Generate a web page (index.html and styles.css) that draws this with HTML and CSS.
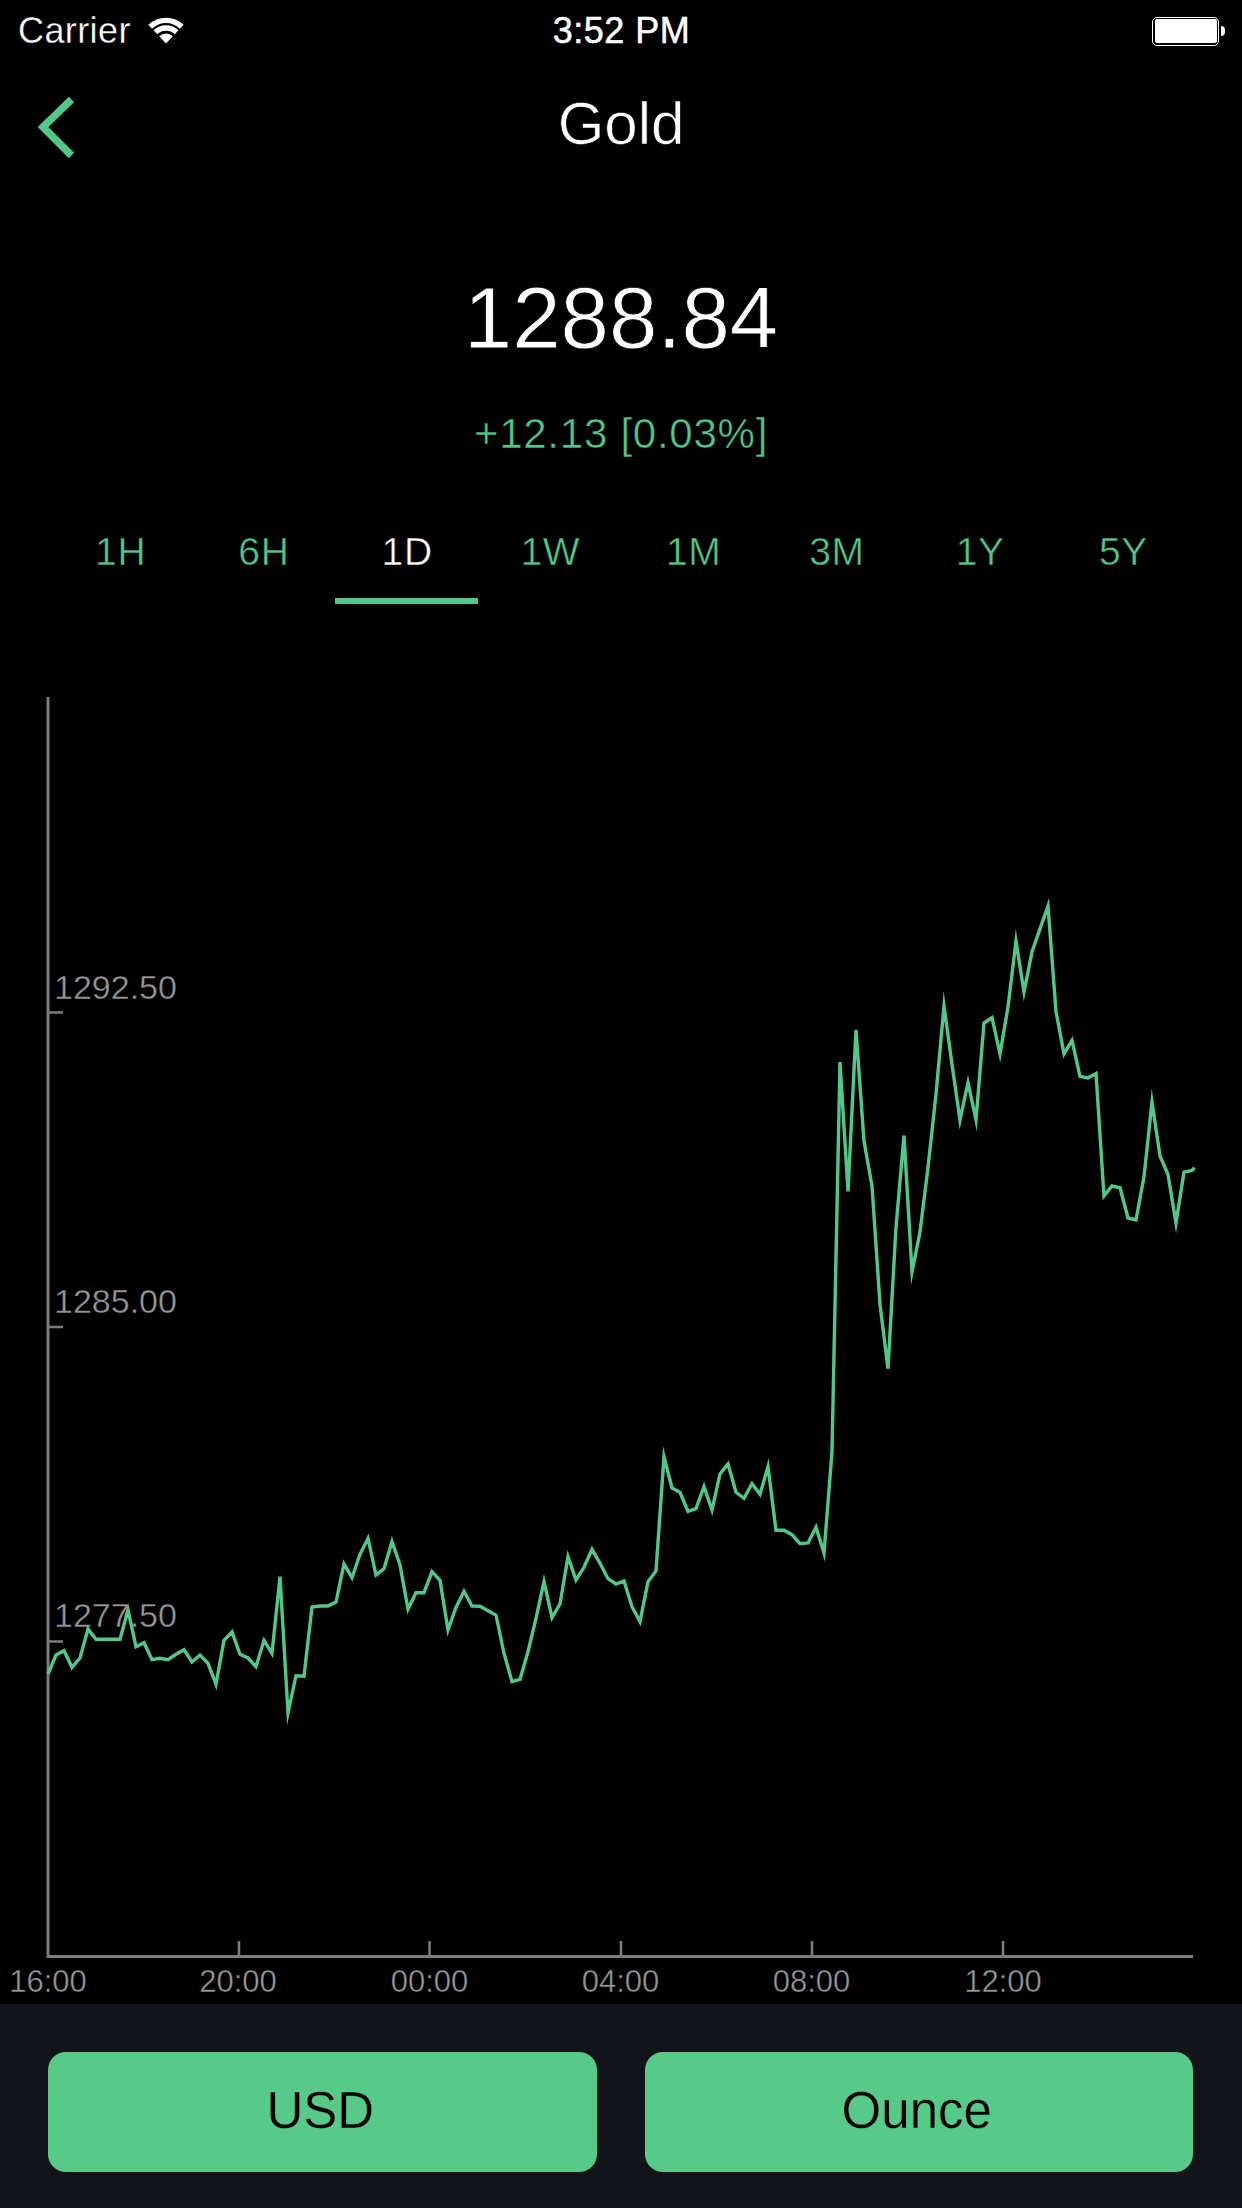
FILE: index.html
```html
<!DOCTYPE html>
<html lang="en">
<head>
<meta charset="utf-8">
<title>Gold</title>
<link rel="stylesheet" href="styles.css">
</head>
<body>
<div class="screen">
  <header class="status">
    <div class="status-left">
      <span class="carrier">Carrier</span>
      <svg class="wifi" viewBox="0 0 38 27" aria-hidden="true">
        <path class="wifi-fan" d="M19 26.5 L12.2 19.2 A10 10 0 0 1 25.8 19.2 Z"/>
        <path class="wifi-arc" d="M8.4 15.3 A15.4 15.4 0 0 1 29.6 15.3"/>
        <path class="wifi-arc" d="M3.2 9.7 A22.8 22.8 0 0 1 34.8 9.7"/>
      </svg>
    </div>
    <span class="clock">3:52 PM</span>
    <div class="status-right">
      <div class="battery"><div class="battery-fill"></div></div>
      <div class="battery-nub"></div>
    </div>
  </header>

  <nav class="nav">
    <svg class="back" viewBox="0 0 44 70" aria-hidden="true">
      <polyline points="39.5,7.5 11,35 39.5,63.5"/>
    </svg>
    <h1 class="title">Gold</h1>
  </nav>

  <section class="quote">
    <div class="price">1288.84</div>
    <div class="change">+12.13 [0.03%]</div>
  </section>

  <div class="tabs">
    <div class="tab">1H</div>
    <div class="tab">6H</div>
    <div class="tab tab-active">1D</div>
    <div class="tab">1W</div>
    <div class="tab">1M</div>
    <div class="tab">3M</div>
    <div class="tab">1Y</div>
    <div class="tab">5Y</div>
  </div>

  <svg class="chart" viewBox="0 604 1242 1400" aria-label="Gold price chart">
    <g class="axis">
      <path d="M48 697 V1956.5 H1193"/>
    </g>
    <g class="tick">
      <path d="M48 1012.5 H63 M48 1327 H63 M48 1641.5 H63"/>
      <path d="M239 1941 V1956 M429.5 1941 V1956 M621 1941 V1956 M812 1941 V1956 M1003 1941 V1956"/>
    </g>
    <g class="ylabels">
      <text x="54" y="999">1292.50</text>
      <text x="54" y="1313">1285.00</text>
      <text x="54" y="1627">1277.50</text>
    </g>
    <g class="xlabels">
      <text x="48" y="1992">16:00</text>
      <text x="238" y="1992">20:00</text>
      <text x="429.5" y="1992">00:00</text>
      <text x="620.5" y="1992">04:00</text>
      <text x="811.5" y="1992">08:00</text>
      <text x="1003" y="1992">12:00</text>
    </g>
    <polyline class="line" points="48,1674 56,1655 64,1650.7 72,1667.3 80,1658 88,1629 96,1639.3 104,1639.3 112,1639.3 120,1639.3 128,1610 136,1646.7 144,1642.7 152,1659.7 160,1658.3 168,1659.7 176,1654.3 184,1649.7 192,1662 200,1655 208,1663.3 216,1684.3 224,1640.3 232,1632 240,1654.3 248,1658 256,1666.7 264,1640.3 272,1653.3 280,1576.7 288,1713 296,1675.7 304,1676.3 312,1607 320,1606 328,1606 336,1602 344,1564 352,1577.7 360,1554.3 368,1538.3 376,1575 384,1568.7 392,1541.7 400,1565 408,1609 416,1592.7 424,1592.7 432,1571.7 440,1580.3 448,1630 456,1607.3 464,1591.3 472,1606 480,1606.3 488,1610.7 496,1615 504,1653.3 512,1681.7 520,1679.3 528,1651.7 536,1618.3 544,1581.7 552,1617.7 560,1604 568,1556.7 576,1580 584,1567.3 592,1549.3 600,1563.3 608,1578.7 616,1584 624,1581 632,1606.7 640,1621.7 648,1581.7 656,1571 664,1456.7 672,1488 680,1492.3 688,1511.3 696,1508.7 704,1486.7 712,1510 720,1474 728,1464 736,1492.3 744,1498.3 752,1483.7 760,1494.3 768,1466.7 776,1530.3 784,1530.3 792,1534.7 800,1543.7 808,1543 816,1527.3 824,1553 832,1452 840,1062 848,1191.5 856,1029.9 864,1141 872,1186 880,1304.4 888,1368.7 896,1227.3 904,1135.5 912,1272 920,1231.9 928,1167.6 936,1094.2 944,1006 952,1064.3 960,1120 968,1082.7 976,1120 984,1023 992,1017.5 1000,1054 1008,1006.9 1016,941 1024,992 1032,951.8 1040,928.9 1048,905.9 1056,1011.5 1064,1054 1072,1040.4 1080,1076.3 1088,1078 1096,1073.5 1104,1196 1112,1186 1120,1187.8 1128,1218 1136,1220 1144,1176.8 1152,1102 1160,1156 1168,1174.5 1176,1223 1184,1172.2 1192,1170.4 1194.5,1167.6"/>
  </svg>

  <footer class="footer">
    <button class="pick">USD</button>
    <button class="pick">Ounce</button>
  </footer>
</div>
</body>
</html>
```
FILE: styles.css
```css
* { box-sizing: border-box; margin: 0; padding: 0; }
html, body { background: #000; }
body { font-family: "Liberation Sans", Arial, sans-serif; color: #fff; }
.screen { width: 1242px; height: 2208px; display: flex; flex-direction: column; overflow: hidden; background: #000; }

.status { height: 60px; padding: 1px 17px 0 18px; display: grid; grid-template-columns: 1fr auto 1fr; align-items: center; font-size: 36px; }
.status-left { display: flex; align-items: center; gap: 16px; }
.carrier { line-height: 60px; letter-spacing: 0.4px; -webkit-text-stroke: 0.3px #000; }
.wifi { width: 38px; height: 27px; margin-top: -2px; }
.wifi-fan { fill: #fff; }
.wifi-arc { fill: none; stroke: #fff; stroke-width: 5.4; }
.clock { line-height: 60px; letter-spacing: 0.5px; -webkit-text-stroke: 0.5px #fff; }
.status-right { display: flex; justify-content: flex-end; align-items: center; gap: 2px; }
.battery { width: 67px; height: 29px; border: 1.5px solid #fff; border-radius: 5px; padding: 1.5px; }
.battery-fill { width: 100%; height: 100%; background: #fff; border-radius: 2px; }
.battery-nub { width: 4px; height: 10px; background: #fff; border-radius: 0 5px 5px 0; }

.nav { height: 64px; margin-top: 32px; display: flex; align-items: center; justify-content: center; position: relative; }
.back { position: absolute; left: 32px; top: 0; width: 44px; height: 70px; }
.back polyline { fill: none; stroke: #52c78a; stroke-width: 7.5; }
.title { font-size: 60px; font-weight: 400; line-height: 64px; -webkit-text-stroke: 0.7px #000; }

.quote { display: flex; flex-direction: column; align-items: center; }
.price { font-size: 87px; line-height: 104px; margin-top: 110px; -webkit-text-stroke: 0.8px #000; }
.change { font-size: 42px; line-height: 48px; margin-top: 40px; letter-spacing: 0.75px; color: #52c78a; -webkit-text-stroke: 0.5px #000; }

.tabs { margin-top: 52px; padding: 0 48px; display: grid; grid-template-columns: repeat(8, 1fr); }
.tab { height: 94px; padding: 20px 0 0 2px; text-align: center; font-size: 39px; line-height: 44px; letter-spacing: 0.6px; color: #52c78a; -webkit-text-stroke: 0.5px #000; }
.tab-active { color: #fff; border-bottom: 6px solid #52c78a; }

.chart { display: block; width: 1242px; height: 1400px; flex: none; }
.axis path { fill: none; stroke: #7d7d7d; stroke-width: 3; }
.tick path { fill: none; stroke: #7d7d7d; stroke-width: 2.5; }
.ylabels text { font-size: 34px; fill: #969696; stroke: #000; stroke-width: 0.4; }
.xlabels text { font-size: 31px; fill: #969696; text-anchor: middle; stroke: #000; stroke-width: 0.4; }
.line { fill: none; stroke: #52c78a; stroke-width: 3.4; stroke-linejoin: miter; stroke-miterlimit: 10; }

.footer { flex: 1; background: #121419; padding: 48px 49px 36px 48px; display: grid; grid-template-columns: 1fr 1fr; gap: 48px; }
.pick { border: 0; border-radius: 18px; padding: 0 4px 4px 0; background: #57ca8a; color: #000; font: 400 51px "Liberation Sans", Arial, sans-serif; -webkit-text-stroke: 0.3px #57ca8a; }
```
